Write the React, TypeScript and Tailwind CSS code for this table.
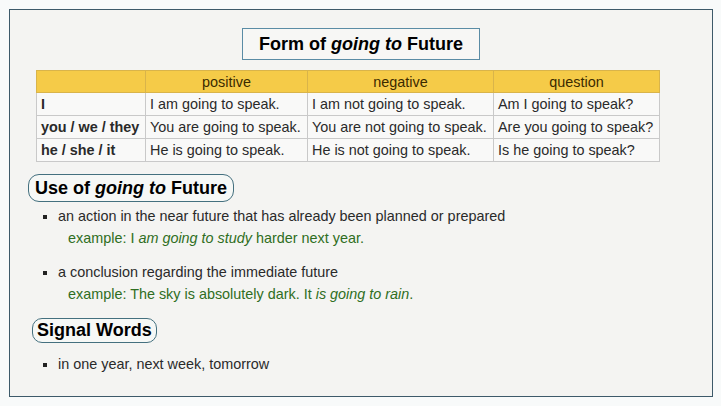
import React from 'react'

const ROWS = [
  { who: 'I', pos: 'I am going to speak.', neg: 'I am not going to speak.', q: 'Am I going to speak?' },
  { who: 'you / we / they', pos: 'You are going to speak.', neg: 'You are not going to speak.', q: 'Are you going to speak?' },
  { who: 'he / she / it', pos: 'He is going to speak.', neg: 'He is not going to speak.', q: 'Is he going to speak?' },
]

function Bullet({ children }: { children: React.ReactNode }) {
  return (
    <div className="flex h-[22px] items-center">
      <span className="ml-[33px] mr-[11px] inline-block h-[4px] w-[4px] bg-[#222]" />
      <span>{children}</span>
    </div>
  )
}

export default function App() {
  return (
    <div
      className="min-h-screen bg-[#f8fafa] pl-[9px] pt-[9px] text-[14.4px] text-[#2a2a2a]"
      style={{ fontFamily: '"Liberation Sans", Arial, sans-serif' }}
    >
      <div className="h-[388px] w-[704px] border border-[#3d5a6a] bg-[#f4f4f2]">
        {/* title */}
        <div className="mt-[18px] flex justify-center">
          <div className="flex h-[32px] items-center border border-[#5a8ca5] bg-[#f7f7f5] px-[16px] text-[18px] font-bold text-black">
            Form of&nbsp;<i>going to</i>&nbsp;Future
          </div>
        </div>

        {/* table */}
        <table className="ml-[26px] mt-[10px] border-collapse leading-[18px]">
          <thead>
            <tr className="h-[22px] bg-[#f5cb48] text-[#3a2a00]">
              <th className="w-[109px] border border-[#d9b44a] p-0 font-normal" />
              <th className="w-[162px] border border-[#d9b44a] p-0 font-normal">positive</th>
              <th className="w-[186px] border border-[#d9b44a] p-0 font-normal">negative</th>
              <th className="w-[166px] border border-[#d9b44a] p-0 font-normal">question</th>
            </tr>
          </thead>
          <tbody>
            {ROWS.map((r) => (
              <tr key={r.who} className="h-[23px] bg-[#f9f9f8]">
                <td className="whitespace-nowrap border border-[#c9c9c9] px-[4px] py-0 font-bold">{r.who}</td>
                <td className="whitespace-nowrap border border-[#c9c9c9] px-[4px] py-0">{r.pos}</td>
                <td className="whitespace-nowrap border border-[#c9c9c9] px-[4px] py-0">{r.neg}</td>
                <td className="whitespace-nowrap border border-[#c9c9c9] px-[4px] py-0">{r.q}</td>
              </tr>
            ))}
          </tbody>
        </table>

        {/* use */}
        <div className="ml-[18px] mt-[12px] flex">
          <div className="flex h-[28px] items-center rounded-[11px] border border-[#44707f] bg-[#f6f8f6] px-[6px] text-[18px] font-bold text-black">
            Use of&nbsp;<i>going to</i>&nbsp;Future
          </div>
        </div>

        <div className="mt-[4px]">
          <Bullet>an action in the near future that has already been planned or prepared</Bullet>
          <div className="flex h-[22px] items-center pl-[58px] text-[#2f6e22]">
            example: I&nbsp;<i>am going to study</i>&nbsp;harder next year.
          </div>
        </div>
        <div className="mt-[12px]">
          <Bullet>a conclusion regarding the immediate future</Bullet>
          <div className="flex h-[22px] items-center pl-[58px] text-[#2f6e22]">
            example: The sky is absolutely dark. It&nbsp;<i>is going to rain</i>.
          </div>
        </div>

        {/* signal words */}
        <div className="ml-[22px] mt-[12px] flex">
          <div className="flex h-[25px] items-center rounded-[10px] border border-[#44707f] bg-[#f6f8f6] px-[4px] text-[18px] font-bold text-black">
            Signal Words
          </div>
        </div>
        <div className="mt-[11px]">
          <Bullet>in one year, next week, tomorrow</Bullet>
        </div>
      </div>
    </div>
  )
}
